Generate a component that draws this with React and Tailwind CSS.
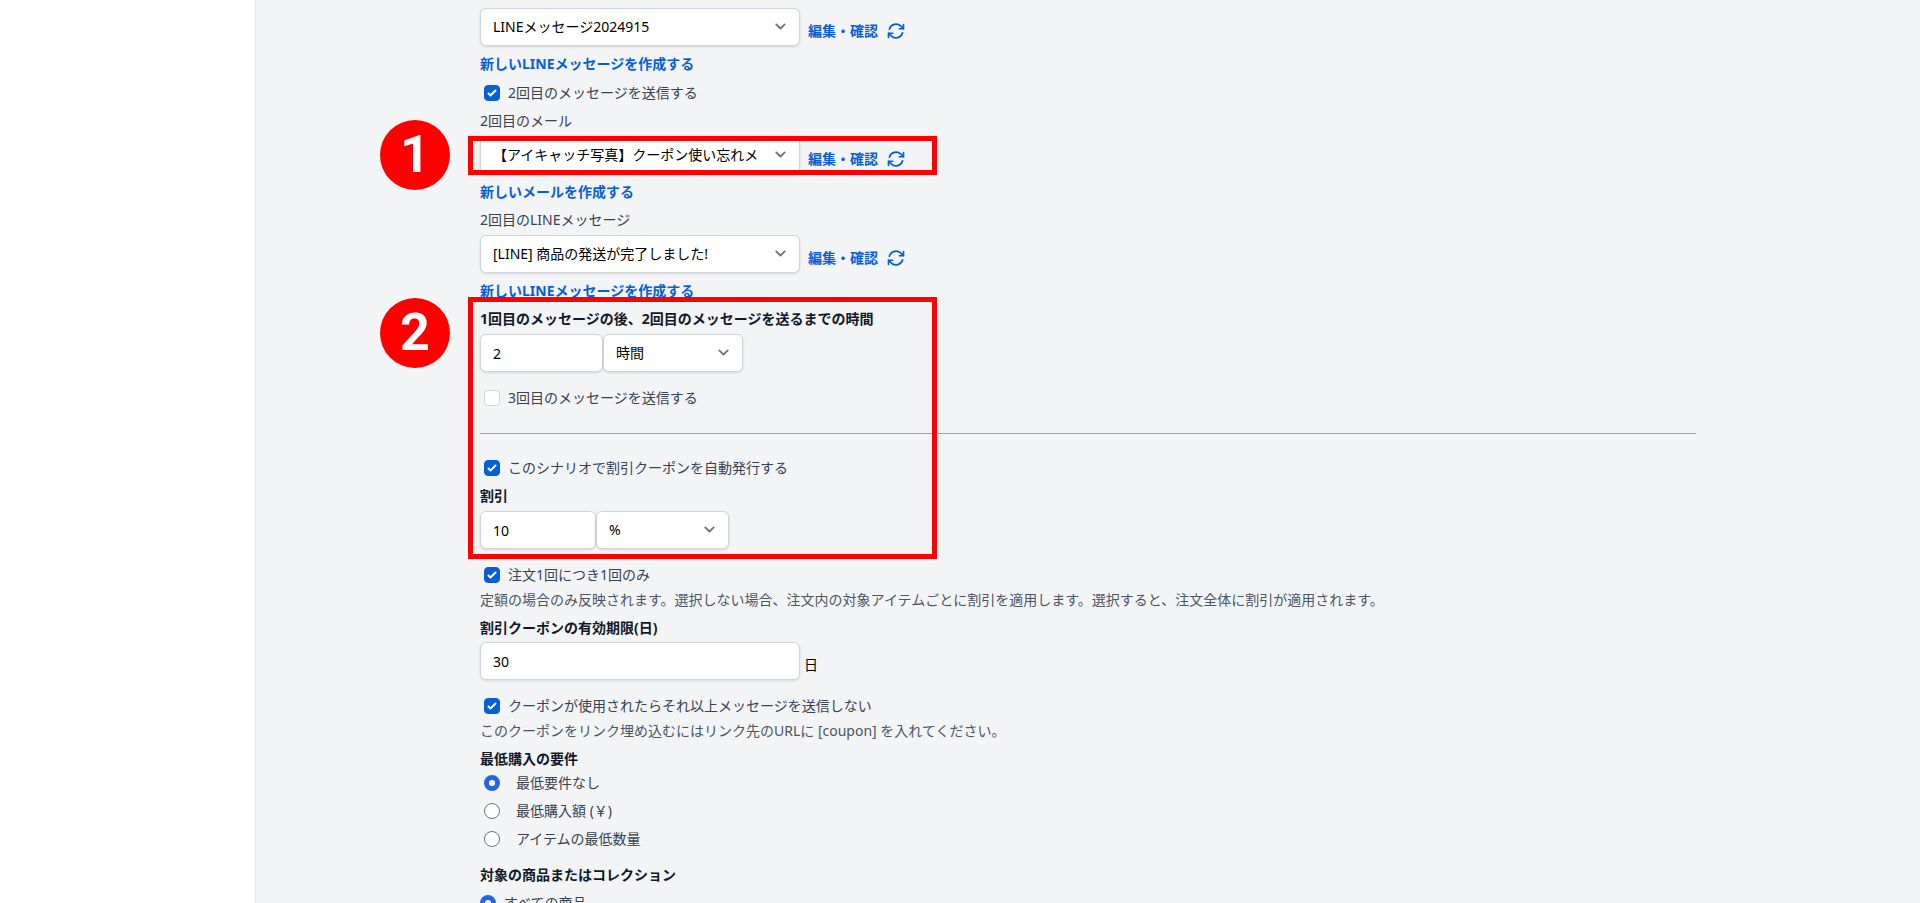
import React, { useState } from 'react';

const SelectBox = ({ id, label, options, className = '' }) => (
  <span className={`relative block ${className}`}>
    <select
      id={id}
      aria-label={label}
      className="block h-[38px] w-full appearance-none rounded-md border border-[#d1d5db] bg-white pr-10 pl-3 text-sm text-black shadow-sm"
    >
      {options.map((option) => (
        <option key={option}>{option}</option>
      ))}
    </select>
    <svg
      viewBox="0 0 20 20"
      fill="none"
      className="pointer-events-none absolute top-2 right-[9px] h-[21px] w-[21px] stroke-[#6b7280]"
    >
      <path d="M6 8l4 4 4-4" strokeWidth="1.8" strokeLinecap="round" strokeLinejoin="round" />
    </svg>
  </span>
);

const TextBox = ({ id, defaultValue, className = '' }) => (
  <input
    id={id}
    type="text"
    defaultValue={defaultValue}
    className={`block h-[38px] rounded-md border border-[#d1d5db] bg-white px-3 text-sm text-black shadow-sm ${className}`}
  />
);

const RefreshIcon = () => (
  <svg
    viewBox="0 0 24 24"
    fill="none"
    stroke="currentColor"
    strokeWidth="2"
    strokeLinecap="round"
    strokeLinejoin="round"
    className="block h-5 w-5"
  >
    <path d="M16.023 9.348h4.992v-.001M2.985 19.644v-4.992m0 0h4.992m-4.993 0l3.181 3.183a8.25 8.25 0 0013.803-3.7M4.031 9.865a8.25 8.25 0 0113.803-3.7l3.181 3.182m0-4.991v4.99" />
  </svg>
);

const CheckRow = ({ id, label, defaultChecked = false, className = '' }) => (
  <div className={`flex h-5 items-center gap-2 pl-1 ${className}`}>
    <span className="relative block h-4 w-4">
      <input
        id={id}
        type="checkbox"
        defaultChecked={defaultChecked}
        className="peer block h-4 w-4 appearance-none rounded border border-[#d1d5db] bg-white checked:border-[#0560d8] checked:bg-[#0560d8]"
      />
      <svg
        viewBox="0 0 16 16"
        className="pointer-events-none absolute inset-0 hidden h-4 w-4 fill-white peer-checked:block"
      >
        <path d="M12.207 4.793a1 1 0 010 1.414l-5 5a1 1 0 01-1.414 0l-2-2a1 1 0 011.414-1.414L6.5 9.086l4.293-4.293a1 1 0 011.414 0z" />
      </svg>
    </span>
    <label htmlFor={id} className="text-[#374151]">
      {label}
    </label>
  </div>
);

const RadioRow = ({ id, name, label, checked, onChange, className = '' }) => (
  <div className={`flex h-5 items-center ${className}`}>
    <input
      id={id}
      type="radio"
      name={name}
      checked={checked}
      onChange={onChange}
      className="block h-4 w-4 appearance-none rounded-full border border-[#6b7280] bg-white checked:border-5 checked:border-[#2563eb]"
    />
    <label htmlFor={id} className="text-[#374151]">
      {label}
    </label>
  </div>
);

const FieldLabel = ({ htmlFor, strong = false, className = '', children }) => (
  <label
    htmlFor={htmlFor}
    className={`block h-5 ${strong ? 'font-bold text-[#111827]' : 'text-[#374151]'} ${className}`}
  >
    {children}
  </label>
);

const MessageSelect = ({ id, options, createLabel, children }) => (
  <>
    <div className="relative mt-[5px] flex items-center gap-2">
      <SelectBox id={id} options={options} className="w-80" />
      <div className="flex items-center gap-2 pt-2 text-[#0560d8]">
        <a href="#edit" className="font-semibold">
          編集・確認
        </a>
        <button type="button" aria-label="更新">
          <RefreshIcon />
        </button>
      </div>
      {children}
    </div>
    <a href="#create" className="mt-2 block h-5 w-fit font-bold text-[#0560d8]">
      {createLabel}
    </a>
  </>
);

const StepBadge = ({ number, className = '' }) => (
  <div
    className={`absolute -left-[100px] flex h-[70px] w-[70px] items-center justify-center rounded-full bg-[#ff0000] font-['Roboto',sans-serif] text-[52px] leading-none font-bold text-white ${className}`}
  >
    {number}
  </div>
);

const requirements = ['最低要件なし', '最低購入額 (￥)', 'アイテムの最低数量'];

const App = () => {
  const [requirement, setRequirement] = useState(0);

  return (
    <div className="flex h-screen overflow-hidden bg-white font-['Noto_Sans','Noto_Sans_CJK_JP',sans-serif] text-sm leading-5">
      <aside className="w-64 shrink-0 border-r border-[#e5e7eb]" />

      <main className="min-w-0 flex-1 overflow-hidden bg-[#f3f4f6] px-56">
        <form className="-mt-[17px]">
          <FieldLabel htmlFor="line-first">LINEメッセージ</FieldLabel>
          <MessageSelect
            id="line-first"
            options={['LINEメッセージ2024915']}
            createLabel="新しいLINEメッセージを作成する"
          />

          <CheckRow id="send-second" label="2回目のメッセージを送信する" defaultChecked className="mt-[9px]" />

          <FieldLabel htmlFor="mail-second" className="mt-2">
            2回目のメール
          </FieldLabel>
          <MessageSelect
            id="mail-second"
            options={['【アイキャッチ写真】クーポン使い忘れメ']}
            createLabel="新しいメールを作成する"
          >
            <div className="pointer-events-none absolute top-0 -left-3 h-[39px] w-[469px] border-5 border-[#ff0000]" />
            <StepBadge number="1" className="-top-4" />
          </MessageSelect>

          <FieldLabel htmlFor="line-second" className="mt-2">
            2回目のLINEメッセージ
          </FieldLabel>
          <MessageSelect
            id="line-second"
            options={['[LINE] 商品の発送が完了しました!']}
            createLabel="新しいLINEメッセージを作成する"
          />

          <div className="relative mt-2">
            <FieldLabel htmlFor="delay" strong>
              1回目のメッセージの後、2回目のメッセージを送るまでの時間
            </FieldLabel>
            <div className="mt-[5px] flex">
              <TextBox id="delay" defaultValue="2" className="w-[123px]" />
              <SelectBox label="時間の単位" options={['時間', '日']} className="w-[140px]" />
            </div>

            <CheckRow id="send-third" label="3回目のメッセージを送信する" className="mt-4" />

            <hr className="mt-[25px] mb-6 border-[#9ca3af]" />

            <CheckRow id="auto-coupon" label="このシナリオで割引クーポンを自動発行する" defaultChecked />

            <FieldLabel htmlFor="discount" strong className="mt-2">
              割引
            </FieldLabel>
            <div className="mt-[5px] flex">
              <TextBox id="discount" defaultValue="10" className="w-[116px]" />
              <SelectBox label="割引の単位" options={['%', '円']} className="w-[133px]" />
            </div>

            <div className="pointer-events-none absolute -top-3 -bottom-[10px] -left-3 w-[469px] border-5 border-[#ff0000]" />
            <StepBadge number="2" className="-top-[11px]" />
          </div>

          <CheckRow id="once" label="注文1回につき1回のみ" defaultChecked className="mt-4" />
          <p className="mt-[5px] h-5 text-[#4b5563]">
            定額の場合のみ反映されます。選択しない場合、注文内の対象アイテムごとに割引を適用します。選択すると、注文全体に割引が適用されます。
          </p>

          <FieldLabel htmlFor="expiry" strong className="mt-2">
            割引クーポンの有効期限(日)
          </FieldLabel>
          <div className="mt-1 flex items-center gap-1">
            <TextBox id="expiry" defaultValue="30" className="w-80" />
            <span className="pt-2 text-black">日</span>
          </div>

          <CheckRow
            id="stop-when-used"
            label="クーポンが使用されたらそれ以上メッセージを送信しない"
            defaultChecked
            className="mt-4"
          />
          <p className="mt-[5px] h-5 text-[#4b5563]">
            このクーポンをリンク埋め込むにはリンク先のURLに [coupon] を入れてください。
          </p>

          <fieldset className="mt-2">
            <legend className="mb-1 h-5 font-bold text-[#111827]">最低購入の要件</legend>
            <div className="flex flex-col gap-2">
              {requirements.map((label, index) => (
                <RadioRow
                  key={label}
                  id={`requirement-${index}`}
                  name="requirement"
                  label={label}
                  checked={requirement === index}
                  onChange={() => setRequirement(index)}
                  className="gap-4 pl-1"
                />
              ))}
            </div>
          </fieldset>

          <fieldset className="mt-4">
            <legend className="mb-2 h-5 font-bold text-[#111827]">対象の商品またはコレクション</legend>
            <RadioRow
              id="target-all"
              name="target"
              label="すべての商品"
              checked
              onChange={() => {}}
              className="gap-2"
            />
          </fieldset>
        </form>
      </main>
    </div>
  );
};

export default App;
